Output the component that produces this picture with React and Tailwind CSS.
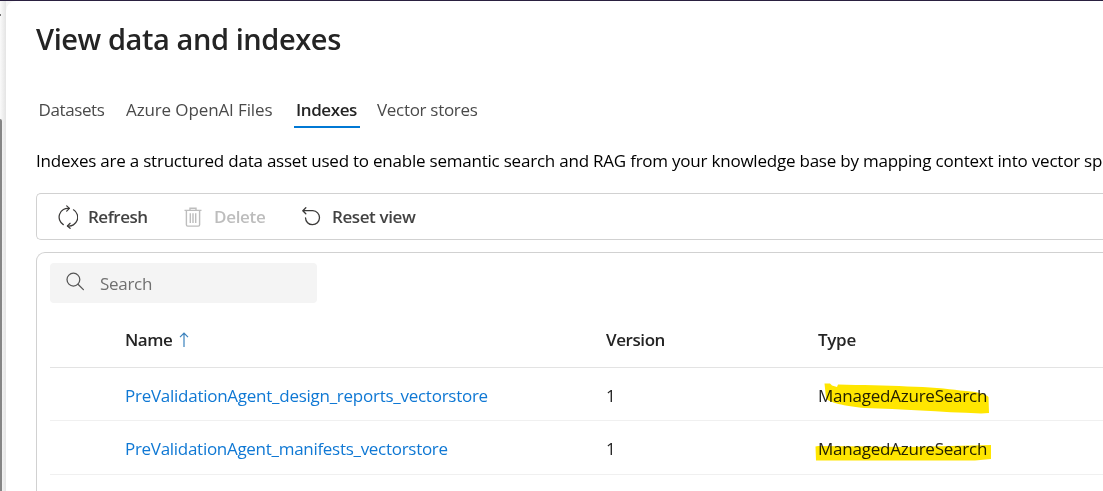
const tabs = [
  { label: 'Datasets', box: 'ml-[38.5px] w-[87.5px]', text: 'tracking-[-0.4px]' },
  { label: 'Azure OpenAI Files', box: 'w-[169px]', text: 'tracking-[-0.12px]' },
  { label: 'Indexes', box: 'w-[82px]', text: '', active: true },
  { label: 'Vector stores', box: 'w-[110px]', text: 'tracking-[-0.3px]' },
];

const rows = [
  {
    name: 'PreValidationAgent_design_reports_vectorstore',
    height: 'h-[53px]',
    tracking: 'tracking-[-0.26px]',
    marker: 'M44.5 16.5 L50 16.5 L52 18.5 L57 20 L58 17.5 C105 18.5 155 19.5 180 23.5 Q204 25 208.5 30 L209 46 L201 46.5 C160 45 120 42 85 41 C65 39.5 47 35 46 31 Z',
  },
  {
    name: 'PreValidationAgent_manifests_vectorstore',
    height: 'h-[54px]',
    tracking: 'tracking-[-0.29px]',
    marker: 'M35.5 26.5 L38 26 L130 27 L211 25 L211 39 L195 40.5 L36 40.5 Z',
  },
];

function RefreshIcon() {
  return (
    <svg className="h-6 w-5" viewBox="0 0 20 24" fill="none" stroke="#3b3a39" strokeWidth="1.25" strokeLinecap="round" strokeLinejoin="round">
      <path d="M5.3 19.6A8.8 8.8 0 0 1 11.2 3.4" />
      <path d="M8.7.9l2.7 2.5-2.7 2.7" />
      <path d="M15.5 4.8A8.8 8.8 0 0 1 9.6 21" />
      <path d="M12.1 18.3L9.4 21l2.7 2.3" />
    </svg>
  );
}

function TrashIcon() {
  return (
    <svg className="h-5 w-[18px]" viewBox="0 0 18 20" fill="none" stroke="#bdbdbd" strokeWidth="1.4">
      <path d="M.5 3.4h17M6 3.2V1.3h6v1.9M2.4 3.5v14.3q0 1.3 1.3 1.3h10.6q1.3 0 1.3-1.3V3.5" />
      <path d="M6.3 6.3v9.6M9 6.3v9.6M11.7 6.3v9.6" />
    </svg>
  );
}

function ResetIcon() {
  return (
    <svg className="h-5 w-5" viewBox="0 0 20 20" fill="none" stroke="#3b3a39" strokeWidth="1.3" strokeLinecap="round" strokeLinejoin="round">
      <path d="M3.8.8L.8 3.7l3 3M1 3.7h9.8a7 7 0 1 1-7.3 7.1" />
    </svg>
  );
}

function SearchIcon() {
  return (
    <svg className="h-5 w-5" viewBox="0 0 20 20" fill="none" stroke="#555" strokeWidth="1.25" strokeLinecap="round">
      <circle cx="8.4" cy="7.6" r="6.4" />
      <path d="M13 12.2L18.4 17.6" />
    </svg>
  );
}

function SortIcon() {
  return (
    <svg className="ml-[7px] h-4 w-[10px]" viewBox="0 0 10 16" fill="none" stroke="#3b82bd" strokeWidth="1.2">
      <path d="M5 15V1.3M1 5.1l4-4 4 4" />
    </svg>
  );
}

export default function App() {
  return (
    <div className="flex h-[491px] w-[1103px] flex-col overflow-hidden bg-[#f5f5f5] font-['Open_Sans',sans-serif] text-[17px] text-[#242424]">
      <div className="h-px shrink-0 bg-[#2a2040]" />
      <div className="flex min-h-0 flex-1">
        <div className="flex w-[6px] shrink-0 flex-col bg-gradient-to-r from-[#fafafa] to-[#e4e4e4]">
          <div className="mt-[13px] h-[2px] w-px bg-[#777]" />
          <div className="mt-[103px] w-[2px] flex-1 rounded-tr bg-[#858585]" />
        </div>
        <main className="flex min-w-0 flex-1 flex-col rounded-tl-[10px] bg-white">
          <h1 className="ml-[30px] mt-[18px] h-[40px] whitespace-nowrap text-[29px] font-semibold leading-[40px] tracking-[-0.42px]">View data and indexes</h1>
          <nav className="-ml-[6px] mt-[35px] flex h-[34px]">
            {tabs.map((tab) => (
              <div key={tab.label} className={`flex shrink-0 whitespace-nowrap ${tab.box}`}>
                {tab.active ? (
                  <span className="-ml-px h-[34px] w-[66px] border-b-2 border-[#0078d4] pl-[2px] font-semibold leading-[32px] tracking-[-0.42px]">{tab.label}</span>
                ) : (
                  <span className={`leading-[32px] text-[#4a4a4a] ${tab.text}`}>{tab.label}</span>
                )}
              </div>
            ))}
          </nav>
          <p className="ml-[30px] mt-[18px] h-[30px] shrink-0 whitespace-nowrap leading-[30px] tracking-[-0.222px] text-black">
            Indexes are a structured data asset used to enable semantic search and RAG from your knowledge base by mapping context into vector sp
          </p>
          <div className="ml-[30px] mt-[17px] flex h-[47px] shrink-0 items-center rounded-l-[5px] border border-r-0 border-[#d1d1d1] font-semibold text-[#424242]">
            <div className="ml-[21px] flex w-[126px] items-center gap-[10px]">
              <RefreshIcon />
              <span className="tracking-[-0.5px]">Refresh</span>
            </div>
            <div className="flex w-[118px] items-center gap-[12px] text-[#bdbdbd]">
              <TrashIcon />
              <span className="tracking-[-0.3px]">Delete</span>
            </div>
            <div className="flex items-center gap-[10px] whitespace-nowrap">
              <ResetIcon />
              <span className="tracking-[-0.4px]">Reset view</span>
            </div>
          </div>
          <section className="ml-[30px] mt-3 flex min-h-0 flex-1 flex-col rounded-tl-[9px] border-l border-t border-[#d1d1d1] pl-[13px] pt-[10px]">
            <div className="flex h-10 w-[267px] shrink-0 rounded bg-[#f4f4f4]">
              <span className="ml-[15px] mt-[9px]"><SearchIcon /></span>
              <span className="ml-[15px] mt-px leading-10 tracking-[-0.3px] text-[#707070]">Search</span>
            </div>
            <div className="flex h-[65px] shrink-0 items-center border-b border-[#e3e3e3] pt-[10px] font-semibold">
              <div className="flex w-[556px] items-center pl-[75px]">
                <span className="tracking-[-0.5px]">Name</span>
                <SortIcon />
              </div>
              <div className="w-[212px] tracking-[-0.42px]">Version</div>
              <div className="tracking-[-0.3px]">Type</div>
            </div>
            {rows.map((row) => (
              <div key={row.name} className={`flex shrink-0 items-center border-b border-[#f0f0f0] pt-[3px] ${row.height}`}>
                <a className={`w-[556px] whitespace-nowrap pl-[75px] text-[#0f78d4] ${row.tracking}`}>{row.name}</a>
                <div className="w-[212px]">1</div>
                <div className="relative tracking-[-0.23px]">
                  ManagedAzureSearch
                  <svg className="pointer-events-none absolute -left-[38px] -top-[16px] mix-blend-multiply" width="230" height="54">
                    <path d={row.marker} fill="#ffe600" />
                  </svg>
                </div>
              </div>
            ))}
          </section>
        </main>
      </div>
    </div>
  );
}
